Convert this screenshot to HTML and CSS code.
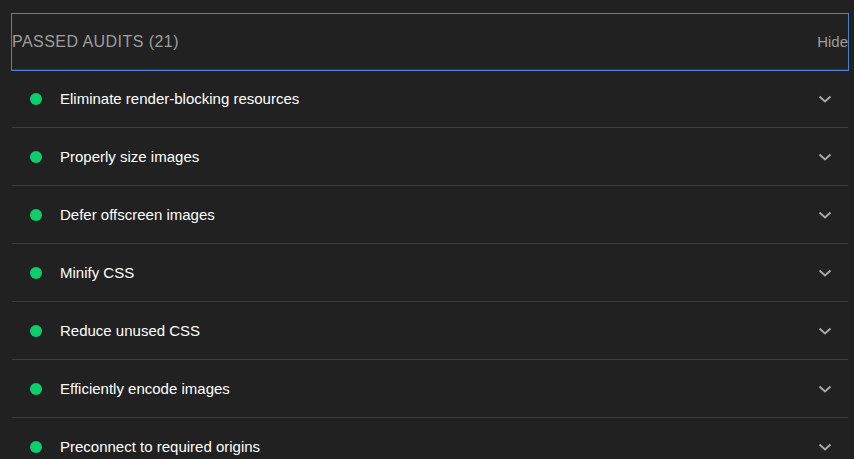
FILE: index.html
```html
<!DOCTYPE html>
<html>
<head>
<meta charset="utf-8">
<link rel="stylesheet" href="styles.css">
</head>
<body>
<div class="group">
  <div class="group-header">
    <span class="group-title">Passed audits (21)</span>
    <span class="group-toggle">Hide</span>
  </div>
  <div class="audit"><span class="dot"></span><span class="audit-title">Eliminate render-blocking resources</span><svg class="chev" viewBox="0 0 14 8" width="14" height="8"><path d="M1.5 1.5 L7 6.5 L12.5 1.5" fill="none" stroke="#a8a8a8" stroke-width="2"/></svg></div>
  <div class="audit"><span class="dot"></span><span class="audit-title">Properly size images</span><svg class="chev" viewBox="0 0 14 8" width="14" height="8"><path d="M1.5 1.5 L7 6.5 L12.5 1.5" fill="none" stroke="#a8a8a8" stroke-width="2"/></svg></div>
  <div class="audit"><span class="dot"></span><span class="audit-title">Defer offscreen images</span><svg class="chev" viewBox="0 0 14 8" width="14" height="8"><path d="M1.5 1.5 L7 6.5 L12.5 1.5" fill="none" stroke="#a8a8a8" stroke-width="2"/></svg></div>
  <div class="audit"><span class="dot"></span><span class="audit-title">Minify CSS</span><svg class="chev" viewBox="0 0 14 8" width="14" height="8"><path d="M1.5 1.5 L7 6.5 L12.5 1.5" fill="none" stroke="#a8a8a8" stroke-width="2"/></svg></div>
  <div class="audit"><span class="dot"></span><span class="audit-title">Reduce unused CSS</span><svg class="chev" viewBox="0 0 14 8" width="14" height="8"><path d="M1.5 1.5 L7 6.5 L12.5 1.5" fill="none" stroke="#a8a8a8" stroke-width="2"/></svg></div>
  <div class="audit"><span class="dot"></span><span class="audit-title">Efficiently encode images</span><svg class="chev" viewBox="0 0 14 8" width="14" height="8"><path d="M1.5 1.5 L7 6.5 L12.5 1.5" fill="none" stroke="#a8a8a8" stroke-width="2"/></svg></div>
  <div class="audit"><span class="dot"></span><span class="audit-title">Preconnect to required origins</span><svg class="chev" viewBox="0 0 14 8" width="14" height="8"><path d="M1.5 1.5 L7 6.5 L12.5 1.5" fill="none" stroke="#a8a8a8" stroke-width="2"/></svg></div>
</div>
</body>
</html>
```
FILE: styles.css
```css
html, body {
  margin: 0;
  padding: 0;
  background: #212121;
  font-family: "Liberation Sans", Arial, sans-serif;
  overflow: hidden;
}
.group {
  padding: 14px 6px 0 12px;
}
.group-header {
  display: flex;
  align-items: center;
  justify-content: space-between;
  height: 55px;
  outline: 1px solid #4a7fd1;
  border-bottom: 1px solid #3c3c3c;
  color: #9e9e9e;
  font-size: 16px;
}
.group-title {
  text-transform: uppercase;
  letter-spacing: 0.45px;
}
.group-toggle {
  font-size: 15px;
}
.audit {
  display: flex;
  align-items: center;
  height: 57px;
  border-bottom: 1px solid #3c3c3c;
}
.dot {
  width: 12px;
  height: 12px;
  border-radius: 50%;
  background: #0cce6b;
  margin-left: 18px;
  margin-right: 18px;
  flex: none;
}
.audit-title {
  color: #ffffff;
  font-size: 15px;
  flex: 1;
}
.chev {
  margin-right: 16px;
  flex: none;
}
```
